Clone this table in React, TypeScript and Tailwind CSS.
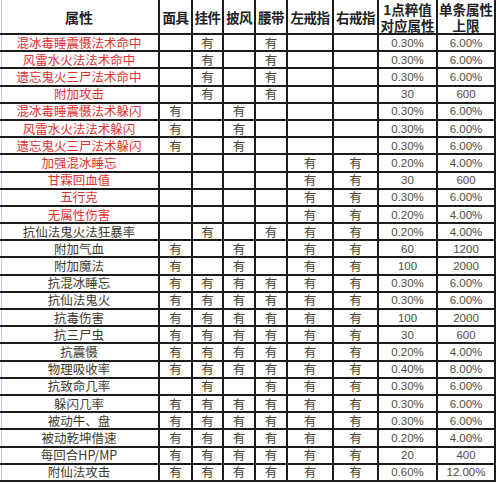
import React from "react";

type Row = { name: string; red?: boolean; marks: string; a: string; b: string };

const rows: Row[] = [
  { name: "混冰毒睡震慑法术命中", red: true, marks: "010100", a: "0.30%", b: "6.00%" },
  { name: "风雷水火法法术命中", red: true, marks: "010100", a: "0.30%", b: "6.00%" },
  { name: "遗忘鬼火三尸法术命中", red: true, marks: "010100", a: "0.30%", b: "6.00%" },
  { name: "附加攻击", red: true, marks: "010100", a: "30", b: "600" },
  { name: "混冰毒睡震慑法术躲闪", red: true, marks: "101000", a: "0.30%", b: "6.00%" },
  { name: "风雷水火法法术躲闪", red: true, marks: "101000", a: "0.30%", b: "6.00%" },
  { name: "遗忘鬼火三尸法术躲闪", red: true, marks: "101000", a: "0.30%", b: "6.00%" },
  { name: "加强混冰睡忘", red: true, marks: "000011", a: "0.20%", b: "4.00%" },
  { name: "甘霖回血值", red: true, marks: "000011", a: "30", b: "600" },
  { name: "五行克", red: true, marks: "000011", a: "0.30%", b: "6.00%" },
  { name: "无属性伤害", red: true, marks: "000011", a: "0.20%", b: "4.00%" },
  { name: "抗仙法鬼火法狂暴率", marks: "010111", a: "0.20%", b: "4.00%" },
  { name: "附加气血", marks: "101011", a: "60", b: "1200" },
  { name: "附加魔法", marks: "101011", a: "100", b: "2000" },
  { name: "抗混冰睡忘", marks: "111111", a: "0.30%", b: "6.00%" },
  { name: "抗仙法鬼火", marks: "111111", a: "0.30%", b: "6.00%" },
  { name: "抗毒伤害", marks: "111111", a: "100", b: "2000" },
  { name: "抗三尸虫", marks: "111111", a: "30", b: "600" },
  { name: "抗震慑", marks: "111111", a: "0.20%", b: "4.00%" },
  { name: "物理吸收率", marks: "111111", a: "0.40%", b: "8.00%" },
  { name: "抗致命几率", marks: "010111", a: "0.30%", b: "6.00%" },
  { name: "躲闪几率", marks: "111111", a: "0.30%", b: "6.00%" },
  { name: "被动牛、盘", marks: "111111", a: "0.30%", b: "6.00%" },
  { name: "被动乾坤借速", marks: "111111", a: "0.20%", b: "4.00%" },
  { name: "每回合HP/MP", marks: "111111", a: "20", b: "400" },
  { name: "附仙法攻击", marks: "111111", a: "0.60%", b: "12.00%" },
];

const cjk = "font-['Noto_Sans_CJK_SC',sans-serif]";
const num = "font-['Liberation_Sans','Noto_Sans_CJK_SC',sans-serif]";
const cell = "bg-white flex items-center justify-center whitespace-nowrap min-h-0";
const first = "shadow-[inset_1px_0_0_#ffffff,inset_2px_0_0_#bccbe2]";

export default function App() {
  const headers = ["面具", "挂件", "披风", "腰带", "左戒指", "右戒指"];
  return (
    <div className="w-[500px] h-[484px] bg-white">
      <div className="grid grid-cols-[158px_31px_29px_30px_30px_44px_43px_57px_56px] grid-rows-[33px_repeat(26,minmax(0,1fr))] gap-[2px] bg-[#1c1c1c] h-[482px] w-[496px] pr-[2px] pb-[2px]">
        <div className={`${cell} ${first} ${cjk} text-[14px] leading-[16px] font-bold text-[#222]`}>属性</div>
        {headers.map((h) => (
          <div
            key={h}
            className={`${cell} ${cjk} text-[13.5px] leading-[16px] font-bold text-[#222] tracking-[-0.5px]`}
          >
            {h}
          </div>
        ))}
        <div className={`${cell} ${cjk} flex-col text-[13.5px] leading-[16px] font-bold text-[#222]`}>
          <span>1点粹值</span>
          <span>对应属性</span>
        </div>
        <div className={`${cell} ${cjk} flex-col text-[13.5px] leading-[16px] font-bold text-[#222]`}>
          <span>单条属性</span>
          <span>上限</span>
        </div>
        {rows.map((r) => (
          <React.Fragment key={r.name}>
            <div
              className={`${cell} ${first} ${cjk} text-[12.5px] leading-[14px] ${
                r.red ? "text-[#e2322e]" : "text-[#3e3a2c]"
              }`}
            >
              {r.name}
            </div>
            {r.marks.split("").map((m, i) => (
              <div key={i} className={`${cell} ${cjk} text-[12.5px] leading-[14px] text-[#4a4536]`}>
                {m === "1" ? "有" : ""}
              </div>
            ))}
            <div className={`${cell} ${num} text-[11.5px] leading-[14px] text-[#4f4c44]`}>{r.a}</div>
            <div className={`${cell} ${num} text-[11.5px] leading-[14px] text-[#4f4c44]`}>{r.b}</div>
          </React.Fragment>
        ))}
      </div>
    </div>
  );
}
